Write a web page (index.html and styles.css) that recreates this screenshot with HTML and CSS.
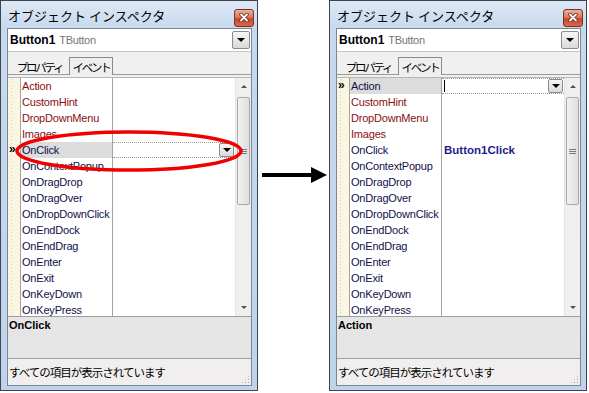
FILE: index.html
```html
<!DOCTYPE html>
<html lang="ja">
<head>
  <meta charset="UTF-8" />
  <title>オブジェクト インスペクタ</title>
  <link rel="stylesheet" href="styles.css">
</head>
<body>
  <div class="screen">
    <!-- before: OnClick selected -->
    <div class="window">
      <div class="titlebar">
        <span class="title">オブジェクト インスペクタ</span>
        <span class="close">
          <svg width="10" height="9" viewBox="0 0 10 9"><path d="M2 1.5l6 6M8 1.5l-6 6" stroke="#6b2a1c" stroke-width="3.4" stroke-linecap="round"/><path d="M2 1.5l6 6M8 1.5l-6 6" stroke="#fff" stroke-width="1.8" stroke-linecap="round"/></svg>
        </span>
      </div>
      <div class="client">
        <div class="combo">
          <span class="obj-name">Button1</span>
          <span class="obj-type">TButton</span>
          <span class="drop big"><i class="tri"></i></span>
        </div>
        <div class="tabs">
          <span class="tab">プロパティ</span>
          <span class="tab active">イベント</span>
        </div>
        <div class="grid">
          <div class="rows">
            <div class="row"><span class="gutter"></span><span class="name ref">Action</span><span class="value"></span></div>
            <div class="row"><span class="gutter"></span><span class="name ref">CustomHint</span><span class="value"></span></div>
            <div class="row"><span class="gutter"></span><span class="name ref">DropDownMenu</span><span class="value"></span></div>
            <div class="row"><span class="gutter"></span><span class="name ref">Images</span><span class="value"></span></div>
            <div class="row selected"><span class="gutter">»</span><span class="name">OnClick</span><span class="value"><span class="drop"><i class="tri"></i></span></span></div>
            <div class="row"><span class="gutter"></span><span class="name">OnContextPopup</span><span class="value"></span></div>
            <div class="row"><span class="gutter"></span><span class="name">OnDragDrop</span><span class="value"></span></div>
            <div class="row"><span class="gutter"></span><span class="name">OnDragOver</span><span class="value"></span></div>
            <div class="row"><span class="gutter"></span><span class="name">OnDropDownClick</span><span class="value"></span></div>
            <div class="row"><span class="gutter"></span><span class="name">OnEndDock</span><span class="value"></span></div>
            <div class="row"><span class="gutter"></span><span class="name">OnEndDrag</span><span class="value"></span></div>
            <div class="row"><span class="gutter"></span><span class="name">OnEnter</span><span class="value"></span></div>
            <div class="row"><span class="gutter"></span><span class="name">OnExit</span><span class="value"></span></div>
            <div class="row"><span class="gutter"></span><span class="name">OnKeyDown</span><span class="value"></span></div>
            <div class="row"><span class="gutter"></span><span class="name">OnKeyPress</span><span class="value"></span></div>
          </div>
          <div class="scrollbar">
            <span class="arrow-btn"><i class="up"></i></span>
            <span class="thumb"><i class="grip-lines"></i></span>
            <span class="track"></span>
            <span class="arrow-btn"><i class="down"></i></span>
          </div>
        </div>
        <div class="desc">OnClick</div>
        <div class="status">すべての項目が表示されています<span class="size-grip"></span></div>
      </div>
      <svg class="callout" width="230" height="44" viewBox="0 0 230 44">
        <ellipse cx="115" cy="22" rx="112" ry="19" fill="none" stroke="#f20000" stroke-width="3.5"/>
      </svg>
    </div>

    <div class="between">
      <svg width="71" height="20" viewBox="0 0 71 20">
        <path d="M4 10H56" stroke="#000" stroke-width="4"/>
        <path d="M53 2L69 10L53 18Z" fill="#000"/>
      </svg>
    </div>

    <!-- after: OnClick handler created -->
    <div class="window">
      <div class="titlebar">
        <span class="title">オブジェクト インスペクタ</span>
        <span class="close">
          <svg width="10" height="9" viewBox="0 0 10 9"><path d="M2 1.5l6 6M8 1.5l-6 6" stroke="#6b2a1c" stroke-width="3.4" stroke-linecap="round"/><path d="M2 1.5l6 6M8 1.5l-6 6" stroke="#fff" stroke-width="1.8" stroke-linecap="round"/></svg>
        </span>
      </div>
      <div class="client">
        <div class="combo">
          <span class="obj-name">Button1</span>
          <span class="obj-type">TButton</span>
          <span class="drop big"><i class="tri"></i></span>
        </div>
        <div class="tabs">
          <span class="tab">プロパティ</span>
          <span class="tab active">イベント</span>
        </div>
        <div class="grid">
          <div class="rows">
            <div class="row selected"><span class="gutter">»</span><span class="name">Action</span><span class="value"><span class="caret"></span><span class="drop"><i class="tri"></i></span></span></div>
            <div class="row"><span class="gutter"></span><span class="name ref">CustomHint</span><span class="value"></span></div>
            <div class="row"><span class="gutter"></span><span class="name ref">DropDownMenu</span><span class="value"></span></div>
            <div class="row"><span class="gutter"></span><span class="name ref">Images</span><span class="value"></span></div>
            <div class="row"><span class="gutter"></span><span class="name">OnClick</span><span class="value handler">Button1Click</span></div>
            <div class="row"><span class="gutter"></span><span class="name">OnContextPopup</span><span class="value"></span></div>
            <div class="row"><span class="gutter"></span><span class="name">OnDragDrop</span><span class="value"></span></div>
            <div class="row"><span class="gutter"></span><span class="name">OnDragOver</span><span class="value"></span></div>
            <div class="row"><span class="gutter"></span><span class="name">OnDropDownClick</span><span class="value"></span></div>
            <div class="row"><span class="gutter"></span><span class="name">OnEndDock</span><span class="value"></span></div>
            <div class="row"><span class="gutter"></span><span class="name">OnEndDrag</span><span class="value"></span></div>
            <div class="row"><span class="gutter"></span><span class="name">OnEnter</span><span class="value"></span></div>
            <div class="row"><span class="gutter"></span><span class="name">OnExit</span><span class="value"></span></div>
            <div class="row"><span class="gutter"></span><span class="name">OnKeyDown</span><span class="value"></span></div>
            <div class="row"><span class="gutter"></span><span class="name">OnKeyPress</span><span class="value"></span></div>
          </div>
          <div class="scrollbar">
            <span class="arrow-btn"><i class="up"></i></span>
            <span class="thumb"><i class="grip-lines"></i></span>
            <span class="track"></span>
            <span class="arrow-btn"><i class="down"></i></span>
          </div>
        </div>
        <div class="desc">Action</div>
        <div class="status">すべての項目が表示されています<span class="size-grip"></span></div>
      </div>
    </div>
  </div>
</body>
</html>
```

FILE: styles.css
```css
* {
  margin: 0;
  padding: 0;
  box-sizing: border-box;
}

body {
  background-color: #ffffff;
  font-family: 'Liberation Sans', 'Noto Sans CJK JP', sans-serif;
  font-size: 11px;
  color: #000000;
}

.screen {
  display: flex;
  align-items: flex-start;
  width: 589px;
  height: 393px;
}

/* window frame */
.window {
  position: relative;
  display: flex;
  flex-direction: column;
  width: 258px;
  height: 391px;
  border: 1px solid #3e4450;
  padding: 0 5px 4px 6px;
  background: linear-gradient(to bottom, #dce8f6 0px, #c7d9ee 28px, #bfd3eb 100%);
}

.titlebar {
  display: flex;
  align-items: center;
  justify-content: space-between;
  height: 27px;
}

.title {
  font-family: 'Noto Sans CJK JP', sans-serif;
  font-size: 13px;
  padding-left: 1px;
  padding-top: 1px;
  color: #000000;
}

.close {
  display: flex;
  align-items: center;
  justify-content: center;
  width: 20px;
  height: 18px;
  margin-top: 6px;
  margin-right: -2px;
  border: 1px solid #7a3222;
  border-radius: 3px;
  background: linear-gradient(to bottom, #eab09c 0%, #d77a60 45%, #c7472b 55%, #d9694a 100%);
}

/* client area */
.client {
  flex: 1;
  display: flex;
  flex-direction: column;
  background-color: #f0f0f0;
  border: 1px solid #7b8799;
}

.combo {
  display: flex;
  align-items: center;
  height: 23px;
  background-color: #ffffff;
  border-bottom: 1px solid #c6c6c6;
  padding-left: 2px;
}

.obj-name {
  font-size: 12px;
  font-weight: bold;
  margin-right: 4px;
}

.obj-type {
  color: #767676;
  letter-spacing: -0.3px;
}

.drop {
  display: flex;
  align-items: center;
  justify-content: center;
  width: 15px;
  height: 14px;
  border: 1px solid #8c8c8c;
  border-radius: 2px;
  background: linear-gradient(to bottom, #f6f6f6, #dadada);
}

.drop.big {
  width: 18px;
  height: 18px;
  margin-left: auto;
  margin-right: 1px;
}

.tri {
  width: 0;
  height: 0;
  border-left: 4px solid transparent;
  border-right: 4px solid transparent;
  border-top: 4px solid #000000;
}

/* tabs */
.tabs {
  display: flex;
  align-items: flex-end;
  height: 23px;
  padding-left: 2px;
  border-bottom: 1px solid #9a9a9a;
  margin-bottom: 2px;
}

.tab {
  display: flex;
  align-items: center;
  justify-content: center;
  width: 59px;
  height: 16px;
  padding-top: 1px;
  font-family: 'Noto Sans CJK JP', sans-serif;
  font-size: 11.5px;
  letter-spacing: -2.3px;
}

.tab.active {
  width: 44px;
  height: 18px;
  margin-bottom: -1px;
  border: 1px solid #8a8a8a;
  border-bottom: none;
  background-color: #f6f6f6;
  background-image: radial-gradient(circle, #e6e6e6 0.6px, transparent 0.8px);
  background-size: 2px 2px;
}

/* property grid */
.grid {
  display: flex;
  height: 239px;
  border-top: 1px solid #b4b4b4;
  background-color: #ffffff;
  overflow: hidden;
}

.rows {
  flex: 1;
  display: flex;
  flex-direction: column;
}

.row {
  display: grid;
  grid-template-columns: 13px 92px 1fr;
  height: 16px;
  flex-shrink: 0;
  line-height: 16px;
}

.gutter {
  background-color: #faf6e2;
  background-image: radial-gradient(circle, #d9d4b8 0.6px, transparent 0.9px);
  background-size: 13px 3px;
  background-position: -3px 0;
  border-right: 1px solid #a3a3a3;
  font-size: 12px;
  font-weight: bold;
  line-height: 14px;
  padding-left: 1px;
}

.name {
  padding-left: 1px;
  color: #10104a;
  letter-spacing: -0.2px;
  border-right: 1px solid #a3a3a3;
  white-space: nowrap;
  overflow: hidden;
}

.name.ref {
  color: #8a0f0f;
}

.value {
  display: flex;
  align-items: center;
  padding-left: 2px;
}

.value.handler {
  font-size: 11.5px;
  font-weight: bold;
  color: #1c1c8a;
}

.row.selected .name {
  background-color: #dcdcdc;
}

.row.selected .value {
  border-top: 1px dotted #9a9a9a;
  border-bottom: 1px dotted #9a9a9a;
  justify-content: space-between;
  padding-right: 1px;
}

.row.selected .value .drop {
  margin-left: auto;
}

.caret {
  width: 1px;
  height: 12px;
  background-color: #000000;
}

/* scrollbar */
.scrollbar {
  display: flex;
  flex-direction: column;
  width: 16px;
  background-color: #efefef;
  border-left: 1px solid #e4e4e4;
}

.arrow-btn {
  display: flex;
  align-items: center;
  justify-content: center;
  height: 17px;
}

.up {
  border-left: 3px solid transparent;
  border-right: 3px solid transparent;
  border-bottom: 3px solid #505050;
}

.down {
  border-left: 3px solid transparent;
  border-right: 3px solid transparent;
  border-top: 3px solid #505050;
}

.thumb {
  display: flex;
  align-items: center;
  justify-content: center;
  height: 108px;
  margin: 2px 1px 0 1px;
  border: 1px solid #a9a9a9;
  border-radius: 2px;
  background: linear-gradient(to right, #f2f2f2, #dedede);
}

.grip-lines {
  width: 7px;
  height: 5px;
  border-top: 1px solid #7a7a7a;
  border-bottom: 1px solid #7a7a7a;
  background: linear-gradient(to bottom, transparent 1px, #7a7a7a 1px, #7a7a7a 2px, transparent 2px);
}

.track {
  flex: 1;
}

/* description + status */
.desc {
  height: 43px;
  padding: 2px 1px;
  font-weight: bold;
  border-top: 1px solid #9e9e9e;
  border-bottom: 1px solid #9e9e9e;
  background-color: #ececec;
  background-image: radial-gradient(circle, #e2e2e2 0.6px, transparent 0.9px);
  background-size: 2px 2px;
}

.status {
  flex: 1;
  position: relative;
  display: flex;
  align-items: center;
  padding-left: 1px;
  font-family: 'Noto Sans CJK JP', sans-serif;
  font-size: 11.5px;
  letter-spacing: -1px;
  background-color: #f0eeee;
}

.size-grip {
  position: absolute;
  right: 1px;
  bottom: 1px;
  width: 9px;
  height: 9px;
  background-image: radial-gradient(circle, #9a9a9a 0.8px, transparent 1px);
  background-size: 3px 3px;
  clip-path: polygon(100% 0, 100% 100%, 0 100%);
}

/* overlays */
.callout {
  position: absolute;
  left: 13px;
  top: 128px;
}

.between {
  width: 71px;
  padding-top: 165px;
  display: flex;
}
```
